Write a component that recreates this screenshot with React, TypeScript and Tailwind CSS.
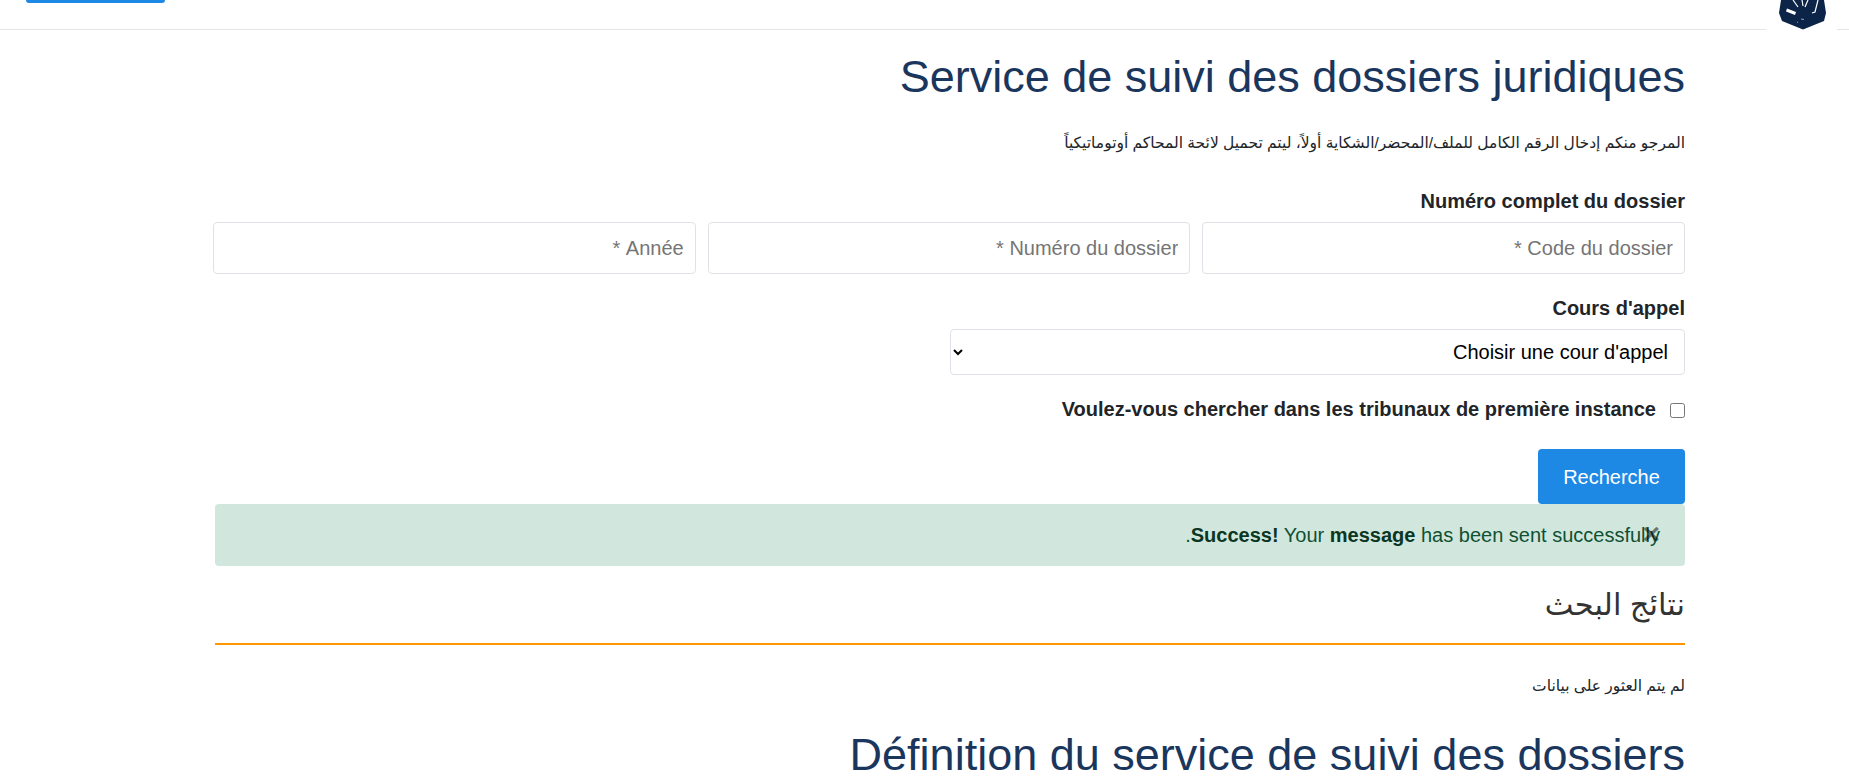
export default function App() {
  return (
    <div dir="rtl" className="min-h-screen bg-white font-['Liberation_Sans','DejaVu_Sans',sans-serif] text-[20px] leading-6 text-[#212529]">
      <header className="relative h-[30px] border-b border-[#e5e5e5]">
        <div className="absolute top-0 left-[26px] h-[3px] w-[139px] rounded-b-[4px] bg-[#1e88e5]"></div>
        <div dir="ltr" className="absolute top-0 right-[12px] h-[31px] w-[71px] bg-white">
          <svg viewBox="0 0 48 30" className="ml-[13px] block h-[30px] w-[48px]">
            <path d="M2 0 L45 0 L47 13 L45 21 L24 29.5 L3 21 L0 13 Z" fill="#0b2447" />
            <path d="M8 8.5 L17 12 L16 15 L7 11.5 Z" fill="#fff" />
            <path d="M14 0 L19 7 M23 0 L24 6 M29 0 L26 7 M39 0 L36 12 L33 13" stroke="#fff" strokeWidth="1.2" fill="none" />
            <path d="M18 22 L19 22.5 M22 19 L25 19.5" stroke="#8fa3bd" strokeWidth="1" fill="none" />
          </svg>
        </div>
      </header>

      <main className="mr-[164px] ml-[213px]">
        <h1 className="mt-[20px] text-[45px] leading-[54px] font-normal text-[#1a365d]">Service de suivi des dossiers juridiques</h1>
        <p className="mt-[27px] text-[15.5px] leading-6">المرجو منكم إدخال الرقم الكامل للملف/المحضر/الشكاية أولاً، ليتم تحميل لائحة المحاكم أوتوماتيكياً</p>

        <form className="mt-[34px]">
          <label className="block font-bold">Numéro complet du dossier</label>
          <div className="mt-[9px] grid grid-cols-3 gap-3">
            <input type="text" placeholder="Code du dossier *" className="h-[52px] rounded-[4px] border border-[#dee2e6] px-[11px] placeholder:text-[#757575] outline-none" />
            <input type="text" placeholder="Numéro du dossier *" className="h-[52px] rounded-[4px] border border-[#dee2e6] px-[11px] placeholder:text-[#757575] outline-none" />
            <input type="text" placeholder="Année *" className="h-[52px] rounded-[4px] border border-[#dee2e6] px-[11px] placeholder:text-[#757575] outline-none" />
          </div>

          <label className="mt-[22px] block font-bold">Cours d'appel</label>
          <select className="mt-[9px] block h-[46px] w-[735px] rounded-[4px] border border-[#dee2e6] bg-white px-[12px] text-[#000] outline-none">
            <option>Choisir une cour d'appel</option>
          </select>

          <div className="mt-[22px] flex items-center gap-[14px]">
            <input type="checkbox" className="mt-[2px] h-[15px] w-[15px]" />
            <label className="font-bold">Voulez-vous chercher dans les tribunaux de première instance</label>
          </div>

          <button type="button" className="mt-[28px] block h-[55px] w-[147px] rounded-[4px] bg-[#1e88e5] text-white">Recherche</button>
        </form>

        <div className="relative ml-[2px] flex h-[62px] items-center rounded-[4px] bg-[#d1e7dd] pr-[25px] text-[#0f5132]">
          <span className="absolute top-[18px] right-[25px] text-[30px] leading-6 font-bold text-black/50">×</span>
          <p><strong className="text-[#0a3622]">Success!</strong> Your <strong className="text-[#0a3622]">message</strong> has been sent successfully.</p>
        </div>

        <h2 className="mt-[14px] ml-[2px] border-b-2 border-[#ff9800] pb-[15px] text-[30.5px] leading-[48px] font-normal text-[#333]">نتائج البحث</h2>
        <p className="mt-[29px] text-[15.5px] leading-6">لم يتم العثور على بيانات</p>
        <h2 className="mt-[30px] text-[45px] leading-[54px] font-normal text-[#1a365d]">Définition du service de suivi des dossiers</h2>
      </main>
    </div>
  )
}
